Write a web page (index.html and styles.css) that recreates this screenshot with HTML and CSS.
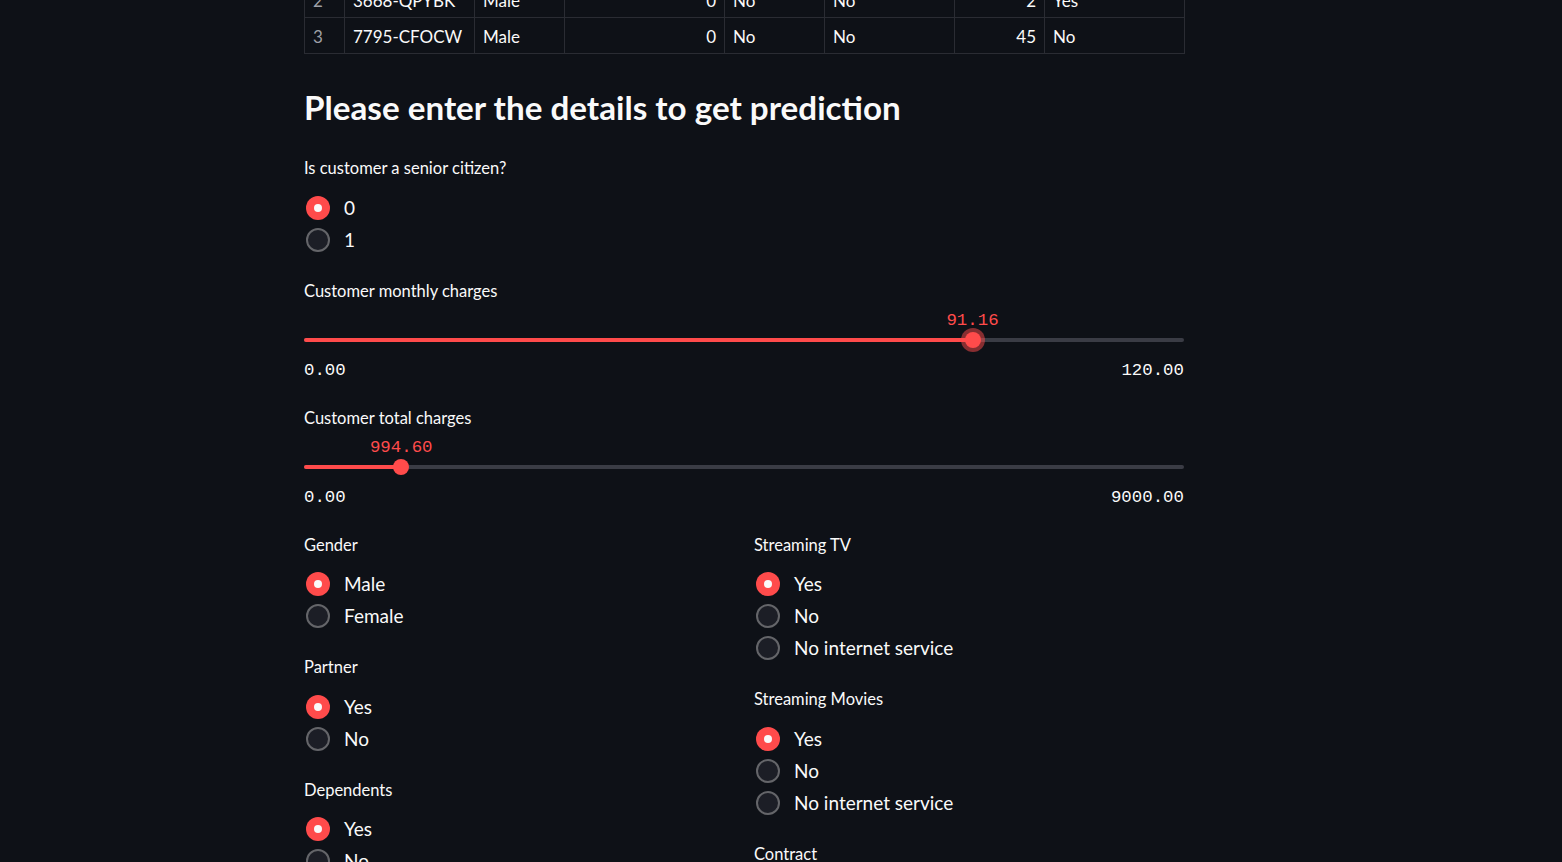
FILE: index.html
```html
<!DOCTYPE html>
<html>
<head>
<meta charset="utf-8">
<link rel="stylesheet" href="styles.css">
</head>
<body>
<div class="main">
  <table class="df">
    <tr>
      <td class="idx">2</td><td class="c1">3668-QPYBK</td><td class="c2">Male</td><td class="c3 num">0</td><td class="c4">No</td><td class="c5">No</td><td class="c6 num">2</td><td class="c7">Yes</td>
    </tr>
    <tr>
      <td class="idx">3</td><td class="c1">7795-CFOCW</td><td class="c2">Male</td><td class="c3 num">0</td><td class="c4">No</td><td class="c5">No</td><td class="c6 num">45</td><td class="c7">No</td>
    </tr>
  </table>

  <h3 class="title">Please enter the details to get prediction</h3>

  <div class="widget">
    <div class="label">Is customer a senior citizen?</div>
    <div class="options">
      <div class="opt on"><span class="radio"></span><span class="otext">0</span></div>
      <div class="opt"><span class="radio"></span><span class="otext">1</span></div>
    </div>
  </div>

  <div class="widget">
    <div class="label">Customer monthly charges</div>
    <div class="slider">
      <div class="track">
        <div class="fill" style="width:75.97%"></div>
        <div class="thumb focus" style="left:75.97%"><span class="val">91.16</span></div>
      </div>
      <div class="ticks"><span>0.00</span><span>120.00</span></div>
    </div>
  </div>

  <div class="widget">
    <div class="label">Customer total charges</div>
    <div class="slider">
      <div class="track">
        <div class="fill" style="width:11.05%"></div>
        <div class="thumb" style="left:11.05%"><span class="val">994.60</span></div>
      </div>
      <div class="ticks"><span>0.00</span><span>9000.00</span></div>
    </div>
  </div>

  <div class="cols">
    <div class="col">
      <div class="widget">
        <div class="label">Gender</div>
        <div class="options">
          <div class="opt on"><span class="radio"></span><span class="otext">Male</span></div>
          <div class="opt"><span class="radio"></span><span class="otext">Female</span></div>
        </div>
      </div>
      <div class="widget">
        <div class="label">Partner</div>
        <div class="options">
          <div class="opt on"><span class="radio"></span><span class="otext">Yes</span></div>
          <div class="opt"><span class="radio"></span><span class="otext">No</span></div>
        </div>
      </div>
      <div class="widget">
        <div class="label">Dependents</div>
        <div class="options">
          <div class="opt on"><span class="radio"></span><span class="otext">Yes</span></div>
          <div class="opt"><span class="radio"></span><span class="otext">No</span></div>
        </div>
      </div>
    </div>
    <div class="col">
      <div class="widget">
        <div class="label">Streaming TV</div>
        <div class="options">
          <div class="opt on"><span class="radio"></span><span class="otext">Yes</span></div>
          <div class="opt"><span class="radio"></span><span class="otext">No</span></div>
          <div class="opt"><span class="radio"></span><span class="otext">No internet service</span></div>
        </div>
      </div>
      <div class="widget">
        <div class="label">Streaming Movies</div>
        <div class="options">
          <div class="opt on"><span class="radio"></span><span class="otext">Yes</span></div>
          <div class="opt"><span class="radio"></span><span class="otext">No</span></div>
          <div class="opt"><span class="radio"></span><span class="otext">No internet service</span></div>
        </div>
      </div>
      <div class="widget">
        <div class="label">Contract</div>
      </div>
    </div>
  </div>
</div>
</body>
</html>
```

FILE: styles.css
```css
html, body {
  margin: 0;
  padding: 0;
  background: #0e1117;
  overflow: hidden;
}
body {
  font-family: "Lato", "Noto Sans", sans-serif;
  color: #fafafa;
  height: 862px;
}
.main {
  width: 880px;
  margin-left: 304px;
  display: flex;
  flex-direction: column;
}
.df {
  border-collapse: collapse;
  margin-top: -19px;
  width: 880px;
  table-layout: fixed;
  font-size: 17px;
}
.df td {
  border: 1px solid #2a2c33;
  height: 36px;
  padding: 1px 8px 0;
  box-sizing: border-box;
  white-space: nowrap;
  overflow: hidden;
}
.df .idx { width: 40px; color: #9ea0a6; }
.df .c1 { width: 130px; }
.df .c2 { width: 90px; }
.df .c3 { width: 160px; }
.df .c4 { width: 100px; }
.df .c5 { width: 130px; }
.df .c6 { width: 90px; }
.df .c7 { width: 140px; }
.df .num { text-align: right; }

.title {
  margin: 33px 0 29px;
  font-size: 33.2px;
  line-height: 40px;
  font-weight: 700;
}
.widget {
  display: flex;
  flex-direction: column;
  margin-bottom: 23px;
}
.label {
  font-size: 16.5px;
  line-height: 24px;
}
.options {
  margin-top: 11.5px;
  display: flex;
  flex-direction: column;
}
.opt {
  height: 32px;
  display: flex;
  align-items: center;
  padding-left: 2px;
}
.radio {
  width: 24px;
  height: 24px;
  box-sizing: border-box;
  border-radius: 50%;
  border: 2.5px solid #646569;
  background: #1c1e26;
  margin-right: 14px;
  display: flex;
  align-items: center;
  justify-content: center;
}
.opt.on .radio {
  border: none;
  background: #ff4b4b;
}
.opt.on .radio::after {
  content: "";
  width: 8px;
  height: 8px;
  border-radius: 50%;
  background: #fafafa;
}
.otext {
  font-size: 19px;
  line-height: 24px;
}

.slider {
  padding-top: 27px;
}
.track {
  position: relative;
  height: 20px;
  display: flex;
  align-items: center;
}
.track::before {
  content: "";
  position: absolute;
  left: 0;
  right: 0;
  top: 8px;
  height: 4px;
  border-radius: 2px;
  background: #3a3c45;
}
.fill {
  position: relative;
  height: 4px;
  border-radius: 2px;
  background: #ff4b4b;
}
.thumb {
  position: absolute;
  top: 10px;
  width: 16px;
  height: 16px;
  margin: -8px 0 0 -8px;
  border-radius: 50%;
  background: #ff4b4b;
}
.thumb.focus {
  box-shadow: 0 0 0 4px rgba(255, 75, 75, 0.5);
}
.val {
  position: absolute;
  left: 50%;
  bottom: 17px;
  transform: translateX(-50%);
  font-family: "Liberation Mono", "DejaVu Sans Mono", monospace;
  font-size: 17.4px;
  line-height: 20px;
  color: #ff4b4b;
  white-space: nowrap;
}
.ticks {
  margin-top: 11px;
  margin-bottom: 2px;
  display: flex;
  justify-content: space-between;
  font-family: "Liberation Mono", "DejaVu Sans Mono", monospace;
  font-size: 17.4px;
  line-height: 20px;
}
.cols {
  display: flex;
  gap: 20px;
}
.col {
  flex: 1;
  display: flex;
  flex-direction: column;
}
```
